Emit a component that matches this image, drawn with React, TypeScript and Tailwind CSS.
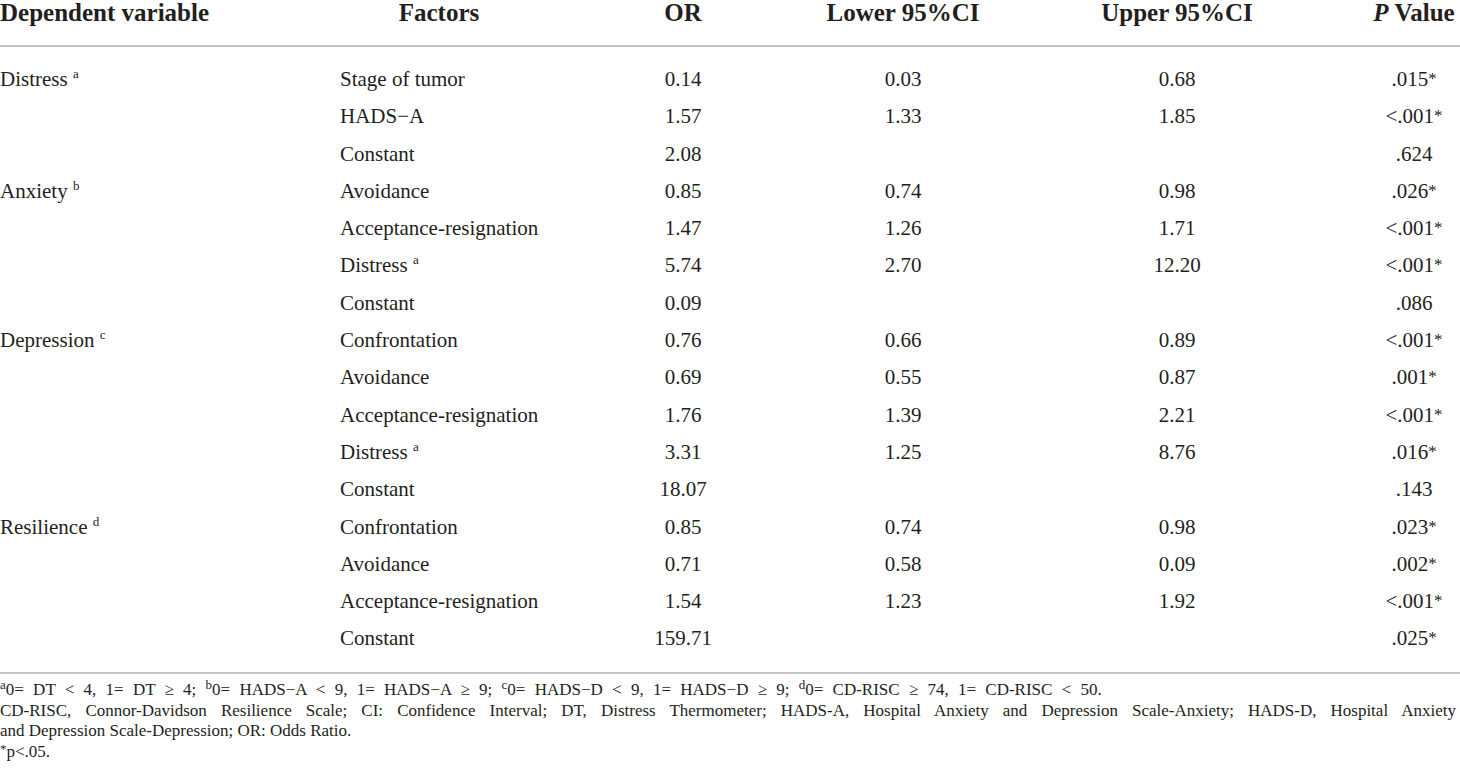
import React from "react";

type Row = {
  dep?: string;
  depSup?: string;
  factor: string;
  factorSup?: string;
  or: string;
  lo: string;
  up: string;
  p: string;
};

const rows: Row[] = [
  { dep: "Distress", depSup: "a", factor: "Stage of tumor", or: "0.14", lo: "0.03", up: "0.68", p: ".015*" },
  { factor: "HADS\u2212A", or: "1.57", lo: "1.33", up: "1.85", p: "<.001*" },
  { factor: "Constant", or: "2.08", lo: "", up: "", p: ".624" },
  { dep: "Anxiety", depSup: "b", factor: "Avoidance", or: "0.85", lo: "0.74", up: "0.98", p: ".026*" },
  { factor: "Acceptance-resignation", or: "1.47", lo: "1.26", up: "1.71", p: "<.001*" },
  { factor: "Distress", factorSup: "a", or: "5.74", lo: "2.70", up: "12.20", p: "<.001*" },
  { factor: "Constant", or: "0.09", lo: "", up: "", p: ".086" },
  { dep: "Depression", depSup: "c", factor: "Confrontation", or: "0.76", lo: "0.66", up: "0.89", p: "<.001*" },
  { factor: "Avoidance", or: "0.69", lo: "0.55", up: "0.87", p: ".001*" },
  { factor: "Acceptance-resignation", or: "1.76", lo: "1.39", up: "2.21", p: "<.001*" },
  { factor: "Distress", factorSup: "a", or: "3.31", lo: "1.25", up: "8.76", p: ".016*" },
  { factor: "Constant", or: "18.07", lo: "", up: "", p: ".143" },
  { dep: "Resilience", depSup: "d", factor: "Confrontation", or: "0.85", lo: "0.74", up: "0.98", p: ".023*" },
  { factor: "Avoidance", or: "0.71", lo: "0.58", up: "0.09", p: ".002*" },
  { factor: "Acceptance-resignation", or: "1.54", lo: "1.23", up: "1.92", p: "<.001*" },
  { factor: "Constant", or: "159.71", lo: "", up: "", p: ".025*" },
];

const grid = "grid grid-cols-[340px_198px_290px_150px_398px_76px]";

function Sup({ c }: { c: string }) {
  return <span className="relative top-[-8px] text-[13px] leading-none">{c}</span>;
}

function FSup({ c }: { c: string }) {
  return <span className="relative top-[-6px] text-[13px] leading-none">{c}</span>;
}

function PVal({ v }: { v: string }) {
  if (v.endsWith("*")) {
    return (
      <span>
        {v.slice(0, -1)}
        <span className="relative top-[-2px] text-[17px] leading-none">*</span>
      </span>
    );
  }
  return <span>{v}</span>;
}

export default function App() {
  return (
    <div
      className="w-[1460px] h-[783px] bg-white text-[#231f20] overflow-hidden"
      style={{ fontFamily: '"Liberation Serif", "Times New Roman", serif' }}
    >
      {/* header */}
      <div className={`${grid} text-[25px] leading-[25px] font-bold pb-[20px] border-b-2 border-[#c4c4c4]`}>
        <div className="justify-self-start whitespace-nowrap">Dependent variable</div>
        <div className="justify-self-center whitespace-nowrap">Factors</div>
        <div className="justify-self-center whitespace-nowrap">OR</div>
        <div className="justify-self-center whitespace-nowrap">Lower 95%CI</div>
        <div className="justify-self-center whitespace-nowrap">Upper 95%CI</div>
        <div className="justify-self-center whitespace-nowrap">
          <span className="italic">P</span> Value
        </div>
      </div>

      {/* body */}
      <div className="pt-[14px] pb-[14px] border-b-2 border-[#c4c4c4]">
        {rows.map((r, i) => (
          <div key={i} className={`${grid} text-[21px] leading-[37.3px] h-[37.3px]`}>
            <div className="justify-self-start whitespace-nowrap">
              {r.dep ? (
                <>
                  {r.dep} <Sup c={r.depSup || ""} />
                </>
              ) : null}
            </div>
            <div className="justify-self-start whitespace-nowrap">
              {r.factor}
              {r.factorSup ? (
                <>
                  {" "}
                  <Sup c={r.factorSup} />
                </>
              ) : null}
            </div>
            <div className="justify-self-center whitespace-nowrap">{r.or}</div>
            <div className="justify-self-center whitespace-nowrap">{r.lo}</div>
            <div className="justify-self-center whitespace-nowrap">{r.up}</div>
            <div className="justify-self-center whitespace-nowrap">
              <PVal v={r.p} />
            </div>
          </div>
        ))}
      </div>

      {/* footnotes */}
      <div className="pt-[6px] text-[17px] leading-[20.8px]">
        <div className="whitespace-nowrap [word-spacing:5px]">
          <FSup c="a" />0= DT &lt; 4, 1= DT ≥ 4; <FSup c="b" />0= HADS−A &lt; 9, 1= HADS−A ≥ 9; <FSup c="c" />0=
          HADS−D &lt; 9, 1= HADS−D ≥ 9; <FSup c="d" />0= CD-RISC ≥ 74, 1= CD-RISC &lt; 50.
        </div>
        <div className="w-[1456px] whitespace-nowrap text-justify [text-align-last:justify]">
          CD-RISC, Connor-Davidson Resilience Scale; CI: Confidence Interval; DT, Distress Thermometer; HADS-A, Hospital
          Anxiety and Depression Scale-Anxiety; HADS-D, Hospital Anxiety
        </div>
        <div className="whitespace-nowrap">and Depression Scale-Depression; OR: Odds Ratio.</div>
        <div className="whitespace-nowrap">
          <span className="relative top-[-4px] text-[13px] leading-none">*</span>p&lt;.05.
        </div>
      </div>
    </div>
  );
}
